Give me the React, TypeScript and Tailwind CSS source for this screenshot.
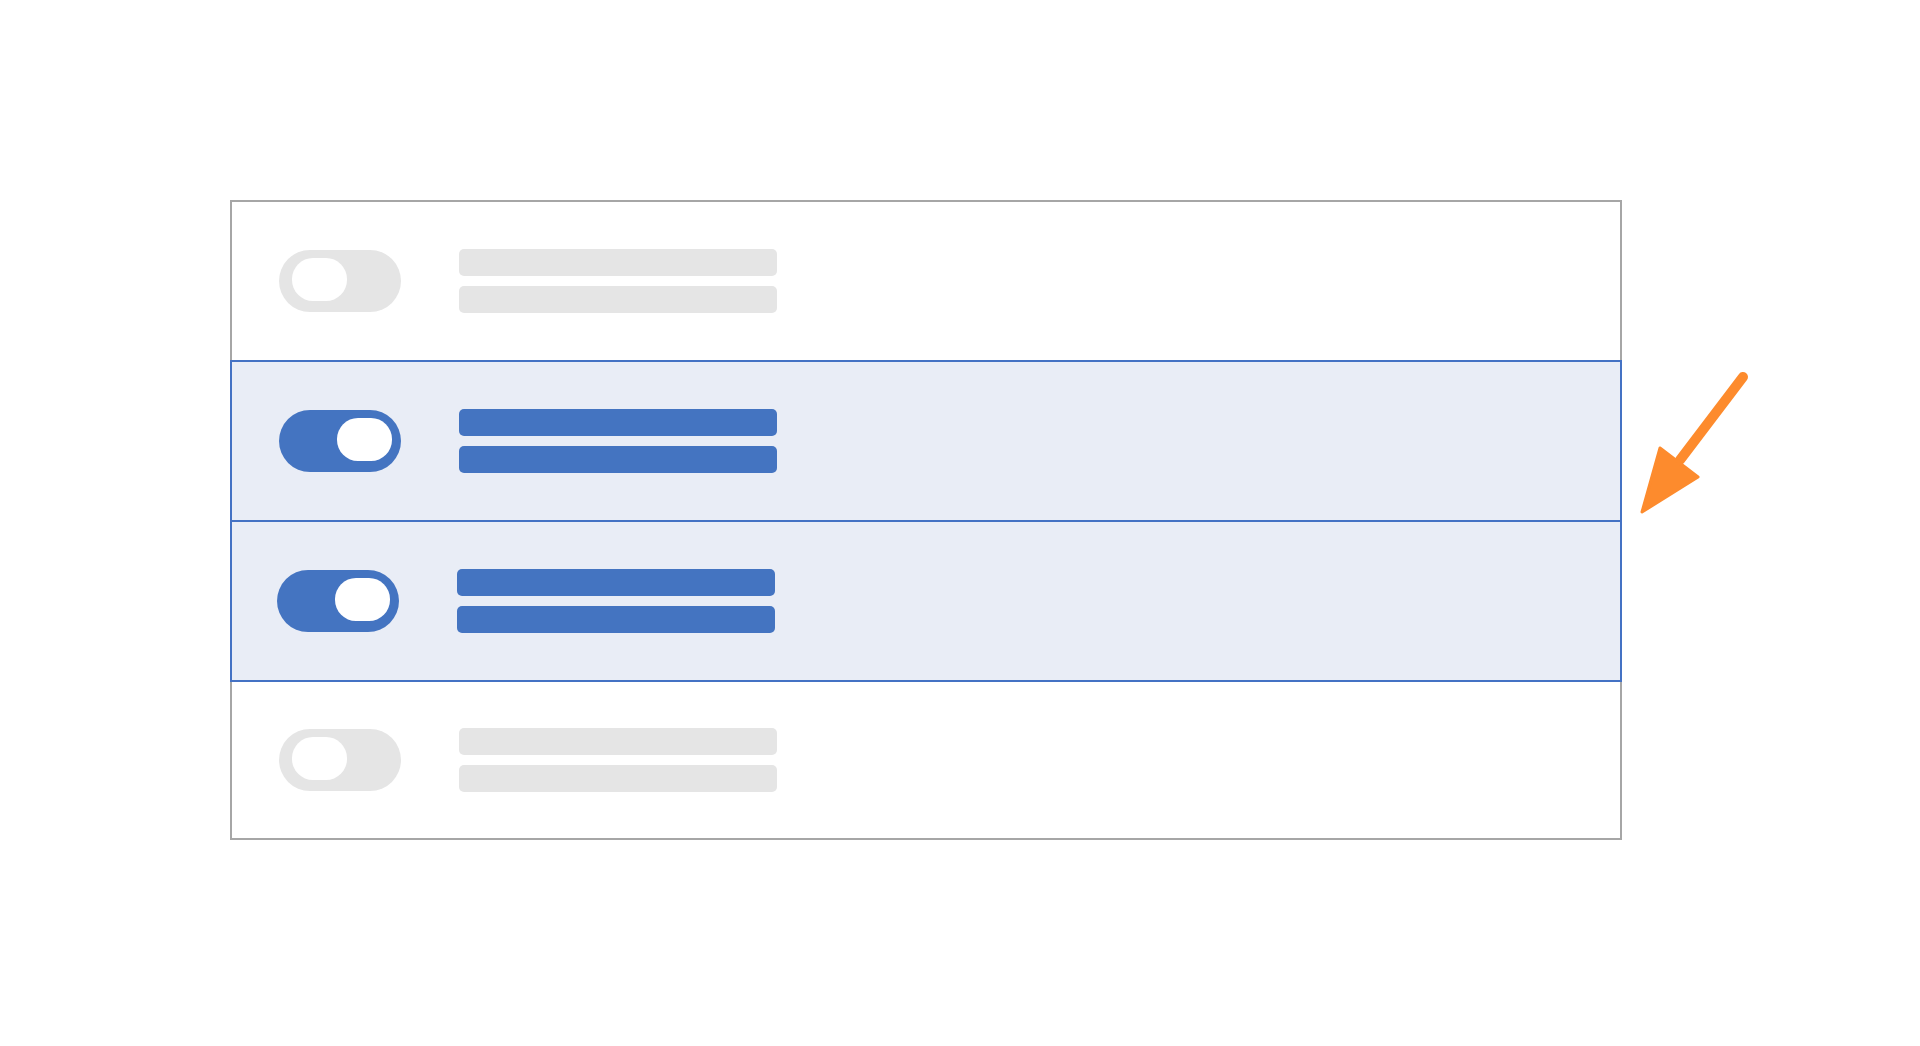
import React from 'react';

type RowProps = {
  active?: boolean;
  shift?: boolean;
};

const Toggle: React.FC<{ on?: boolean }> = ({ on = false }) => (
  <div
    className={`flex h-[62px] w-[122px] shrink-0 items-start rounded-full pt-[8px] ${
      on ? 'justify-end bg-[#4474c1] pr-[9px]' : 'justify-start bg-[#e5e5e5] pl-[13px]'
    }`}
  >
    <div className="h-[43px] w-[55px] rounded-[21px] bg-white" />
  </div>
);

const Bars: React.FC<{ on?: boolean }> = ({ on = false }) => {
  const color = on ? 'bg-[#4474c1]' : 'bg-[#e5e5e5]';
  return (
    <div className="flex flex-col gap-[10px]">
      <div className={`h-[27px] w-[318px] rounded-[5px] ${color}`} />
      <div className={`h-[27px] w-[318px] rounded-[5px] ${color}`} />
    </div>
  );
};

const Row: React.FC<RowProps & { className?: string }> = ({ active = false, shift = false, className = '' }) => (
  <div className={`flex items-center gap-[58px] ${shift ? 'pl-[45px]' : 'pl-[47px]'} ${className}`}>
    <Toggle on={active} />
    <Bars on={active} />
  </div>
);

// small annotation arrow pointing at the selected rows
const Arrow: React.FC = () => (
  <svg width="130" height="170" viewBox="0 0 130 170" className="ml-[8px] mt-[159px] shrink-0">
    <line x1="113" y1="18" x2="50" y2="101" stroke="#fd8b2d" strokeWidth="10" strokeLinecap="round" />
    <polygon
      points="12,153 30,89 68,118"
      fill="#fd8b2d"
      stroke="#fd8b2d"
      strokeWidth="3"
      strokeLinejoin="round"
    />
  </svg>
);

export default function App() {
  return (
    <div className="flex min-h-screen items-start bg-white pl-[230px] pt-[200px]">
      <div className="flex w-[1392px] shrink-0 flex-col border-2 border-[#a6a6a6] bg-white">
        <Row className="h-[158px]" />
        <div className="-mx-[2px] flex flex-col border-2 border-[#4472c4] bg-[#e9edf6]">
          <Row active className="h-[160px] border-b-2 border-[#4472c4]" />
          <Row active shift className="h-[158px]" />
        </div>
        <Row className="h-[156px]" />
      </div>
      <Arrow />
    </div>
  );
}
